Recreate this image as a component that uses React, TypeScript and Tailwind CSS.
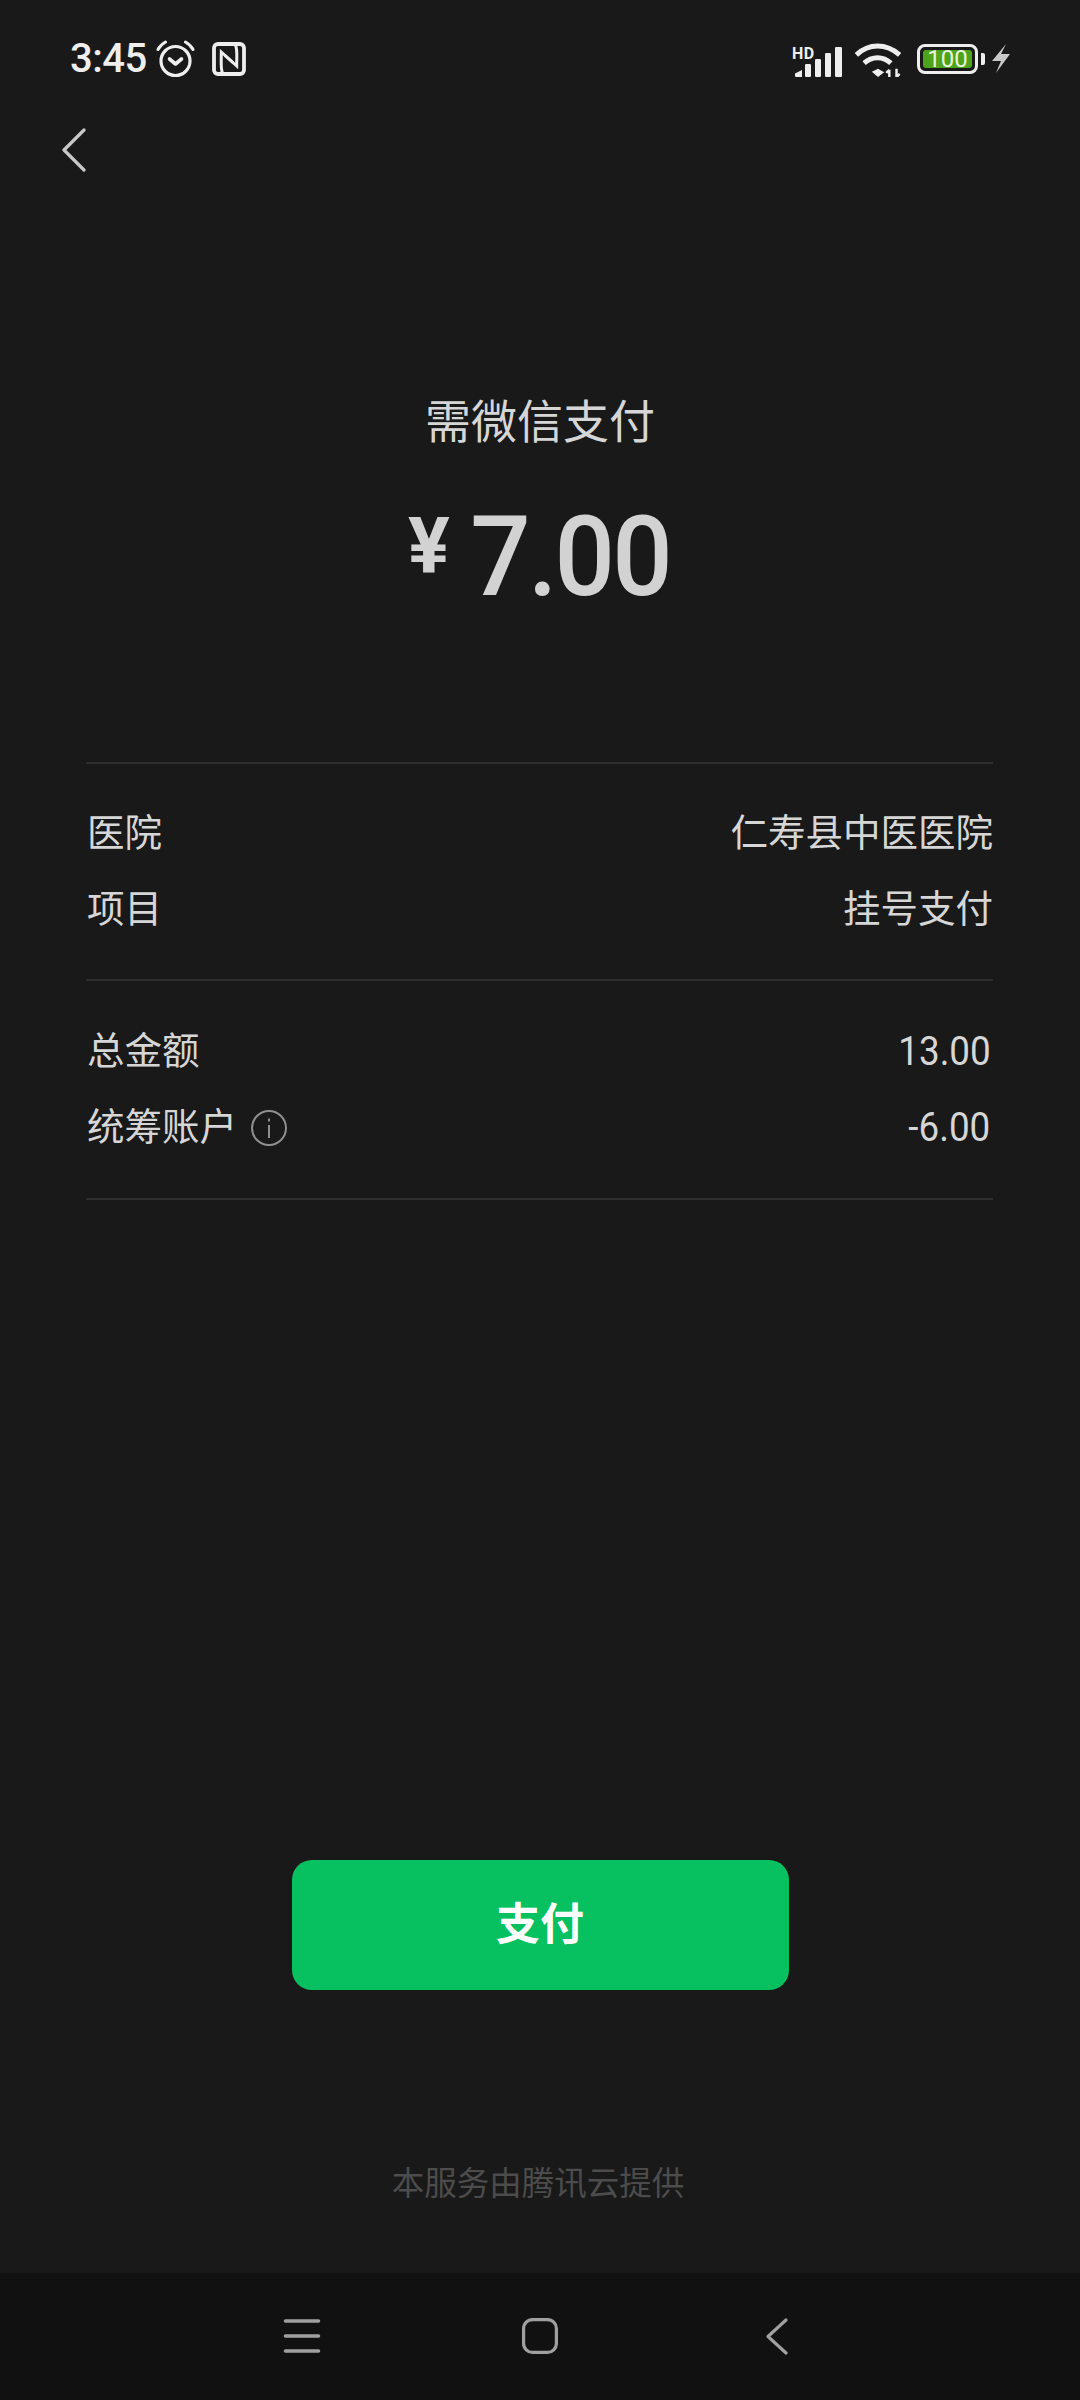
const cjk = "font-['Roboto','Noto_Sans_CJK_SC',sans-serif]";

const Alarm = () => (
  <svg width="40" height="38" viewBox="0 0 40 38" fill="none" stroke="#eeeeee" strokeLinecap="round">
    <circle cx="19.500" cy="21" r="14.500" strokeWidth="3.200" />
    <path d="M13.500 19l6 5 6-5" strokeWidth="3.600" strokeLinejoin="round" />
    <path d="M2 9.500C3.500 6.500 6 4 9.500 2" strokeWidth="3" />
    <path d="M37 9.500C35.500 6.500 33 4 29.500 2" strokeWidth="3" />
  </svg>
);

const Nfc = () => (
  <svg width="34" height="34" viewBox="0 0 34 34" fill="none" stroke="#eeeeee">
    <rect x="2" y="2" width="30" height="30" rx="4" strokeWidth="3.800" />
    <path d="M10.500 31C8.500 27 9.300 21 9.300 10L21 20.500" strokeWidth="3" />
    <path d="M23.500 3C25.500 7 24.700 13 24.700 24L13 13.500" strokeWidth="3" />
  </svg>
);

const Signal = () => (
  <svg width="47" height="30" viewBox="0 0 47 30" fill="#eeeeee">
    <path d="M0 26.500L7 23V30H1.500C.500 30 0 29.500 0 28.500z" />
    <rect x="10" y="17" width="6" height="13" rx="1.200" />
    <rect x="20" y="12" width="6" height="18" rx="1.200" />
    <rect x="30" y="6" width="6" height="24" rx="1.200" />
    <rect x="40" y="0" width="7" height="30" rx="1.200" />
  </svg>
);

const Wifi = () => (
  <svg width="48" height="35" viewBox="0 0 46 34" fill="none" stroke="#eeeeee" strokeWidth="4.800">
    <path d="M2 12.500C14 1 31 1 44 12.500" />
    <path d="M9.500 20.500C17 13.500 28 13.500 35.500 20.500" />
    <path d="M17 29L23 26L29 29.500L23 34z" fill="#eeeeee" stroke="none" />
    <path d="M34 34V27M34 27l-3 3M41 26v8M41 34l3-3" strokeWidth="2.400" />
  </svg>
);

const Bolt = () => (
  <svg width="20" height="30" viewBox="0 0 20 30" fill="#c8c8c8">
    <path d="M14 0L0 17h9L4 29L18 10H9z" />
  </svg>
);

const Chevron = ({ w, h, sw, color }: { w: number; h: number; sw: number; color: string }) => (
  <svg width={w} height={h} viewBox={`0 0 ${w} ${h}`} fill="none" stroke={color} strokeWidth={sw} strokeLinecap="round" strokeLinejoin="round">
    <path d={`M${w - 2} 2L2 ${h / 2}L${w - 2} ${h - 2}`} />
  </svg>
);

const Row = ({ label, value }: { label: React.ReactNode; value: string }) => (
  <div className="flex h-[76px] items-center justify-between pl-[1px] text-[37.500px]">
    <div className="flex items-center">{label}</div>
    <span>{value}</span>
  </div>
);

const Num = ({ label, value }: { label: React.ReactNode; value: string }) => (
  <div className="flex h-[76px] items-center justify-between pl-[1px] text-[37.500px]">
    <div className="flex items-center">{label}</div>
    <span className="origin-right scale-x-[0.92] pr-[3px] text-[40px]">{value}</span>
  </div>
);

export default function App() {
  return (
    <div className={`flex h-[2400px] w-[1080px] flex-col overflow-hidden bg-[#191919] text-[#d6d6d6] ${cjk}`}>
      {/* Status bar */}
      <div className="mt-[40px] flex h-[38px] items-center justify-between pl-[70px] pr-[68px] text-[#eeeeee]">
        <div className="flex items-center">
          <span className="text-[40px] font-medium leading-none tracking-[-0.5px]">3:45</span>
          <span className="ml-[9px]"><Alarm /></span>
          <span className="ml-[16px]"><Nfc /></span>
        </div>
        <div className="flex items-center">
          <div className="relative mt-[6px] h-[30px] w-[47px]">
            <span className="absolute left-[-3px] top-[-1px] text-[16px] font-bold leading-none tracking-[0.5px]">HD</span>
            <Signal />
          </div>
          <span className="ml-[12px] mt-[1px]"><Wifi /></span>
          <div className="ml-[15px] flex items-center">
            <div className="flex h-[30px] w-[61px] items-center justify-center rounded-[8px] border-[3px] border-[#eeeeee] p-[3px]">
              <div className="flex h-full w-full items-center justify-center rounded-[3px] bg-[#4ea31c] text-[24px] leading-none text-[#e8f5dc]">100</div>
            </div>
            <div className="ml-[3px] h-[12px] w-[4px] rounded-r-[2px] bg-[#eeeeee]" />
          </div>
          <span className="ml-[7px]"><Bolt /></span>
        </div>
      </div>

      {/* Back */}
      <div className="mt-[50px] pl-[62px]">
        <Chevron w={24} h={44} sw={3.200} color="#c8c8c8" />
      </div>

      {/* Amount */}
      <div className="mt-[220px] h-[60px] text-center text-[46px] leading-[60px]">需微信支付</div>
      <div className="mt-[45px] flex h-[120px] items-center justify-center pl-[3px] text-[#d2d2d2]">
        <span className="mb-[20px] text-[78px] font-bold leading-none">¥</span>
        <span className="ml-[15px] scale-x-[0.95] text-[112px] font-medium leading-none tracking-[-3px]">7.00</span>
      </div>

      {/* Details */}
      <div className="ml-[86px] mr-[87px] mt-[145px] border-t-2 border-[#2e2e2e] pb-[31px] pt-[32px]">
        <Row label="医院" value="仁寿县中医医院" />
        <Row label="项目" value="挂号支付" />
      </div>
      <div className="ml-[86px] mr-[87px] border-t-2 border-[#2e2e2e] pb-[32px] pt-[33px]">
        <Num label="总金额" value="13.00" />
        <Num
          label={
            <>
              统筹账户
              <svg className="ml-[13px]" width="38" height="38" viewBox="0 0 38 38" fill="none" stroke="#8f8f8f" strokeWidth="2">
                <circle cx="19" cy="19" r="17" />
                <path d="M19 16v13" />
                <path d="M19 9.500v3" />
              </svg>
            </>
          }
          value="-6.00"
        />
      </div>
      <div className="ml-[86px] mr-[87px] border-t-2 border-[#2e2e2e]" />

      {/* Pay */}
      <div className="mt-[660px] flex justify-center">
        <button className="h-[130px] w-[497px] rounded-[20px] bg-[#07c160] text-[44px] font-bold text-white">支付</button>
      </div>

      <div className="mt-[168px] pr-[4px] text-center text-[32.500px] leading-[52px] text-[#4c4c4c]">本服务由腾讯云提供</div>

      {/* Nav bar */}
      <div className="mt-[63px] flex h-[128px] items-center bg-[#111111] pl-[282px]">
        <svg width="40" height="40" viewBox="0 0 40 40" stroke="#a0a0a0" strokeWidth="3.600" strokeLinecap="round">
          <path d="M3.500 5h33M3.500 20h33M3.500 35h33" />
        </svg>
        <svg className="ml-[198px]" width="40" height="40" viewBox="0 0 40 40" fill="none" stroke="#a0a0a0" strokeWidth="3.200">
          <rect x="3.600" y="3.600" width="32.800" height="32.800" rx="9" />
        </svg>
        <span className="ml-[206px]"><Chevron w={22} h={37} sw={3.200} color="#a0a0a0" /></span>
      </div>
    </div>
  );
}
